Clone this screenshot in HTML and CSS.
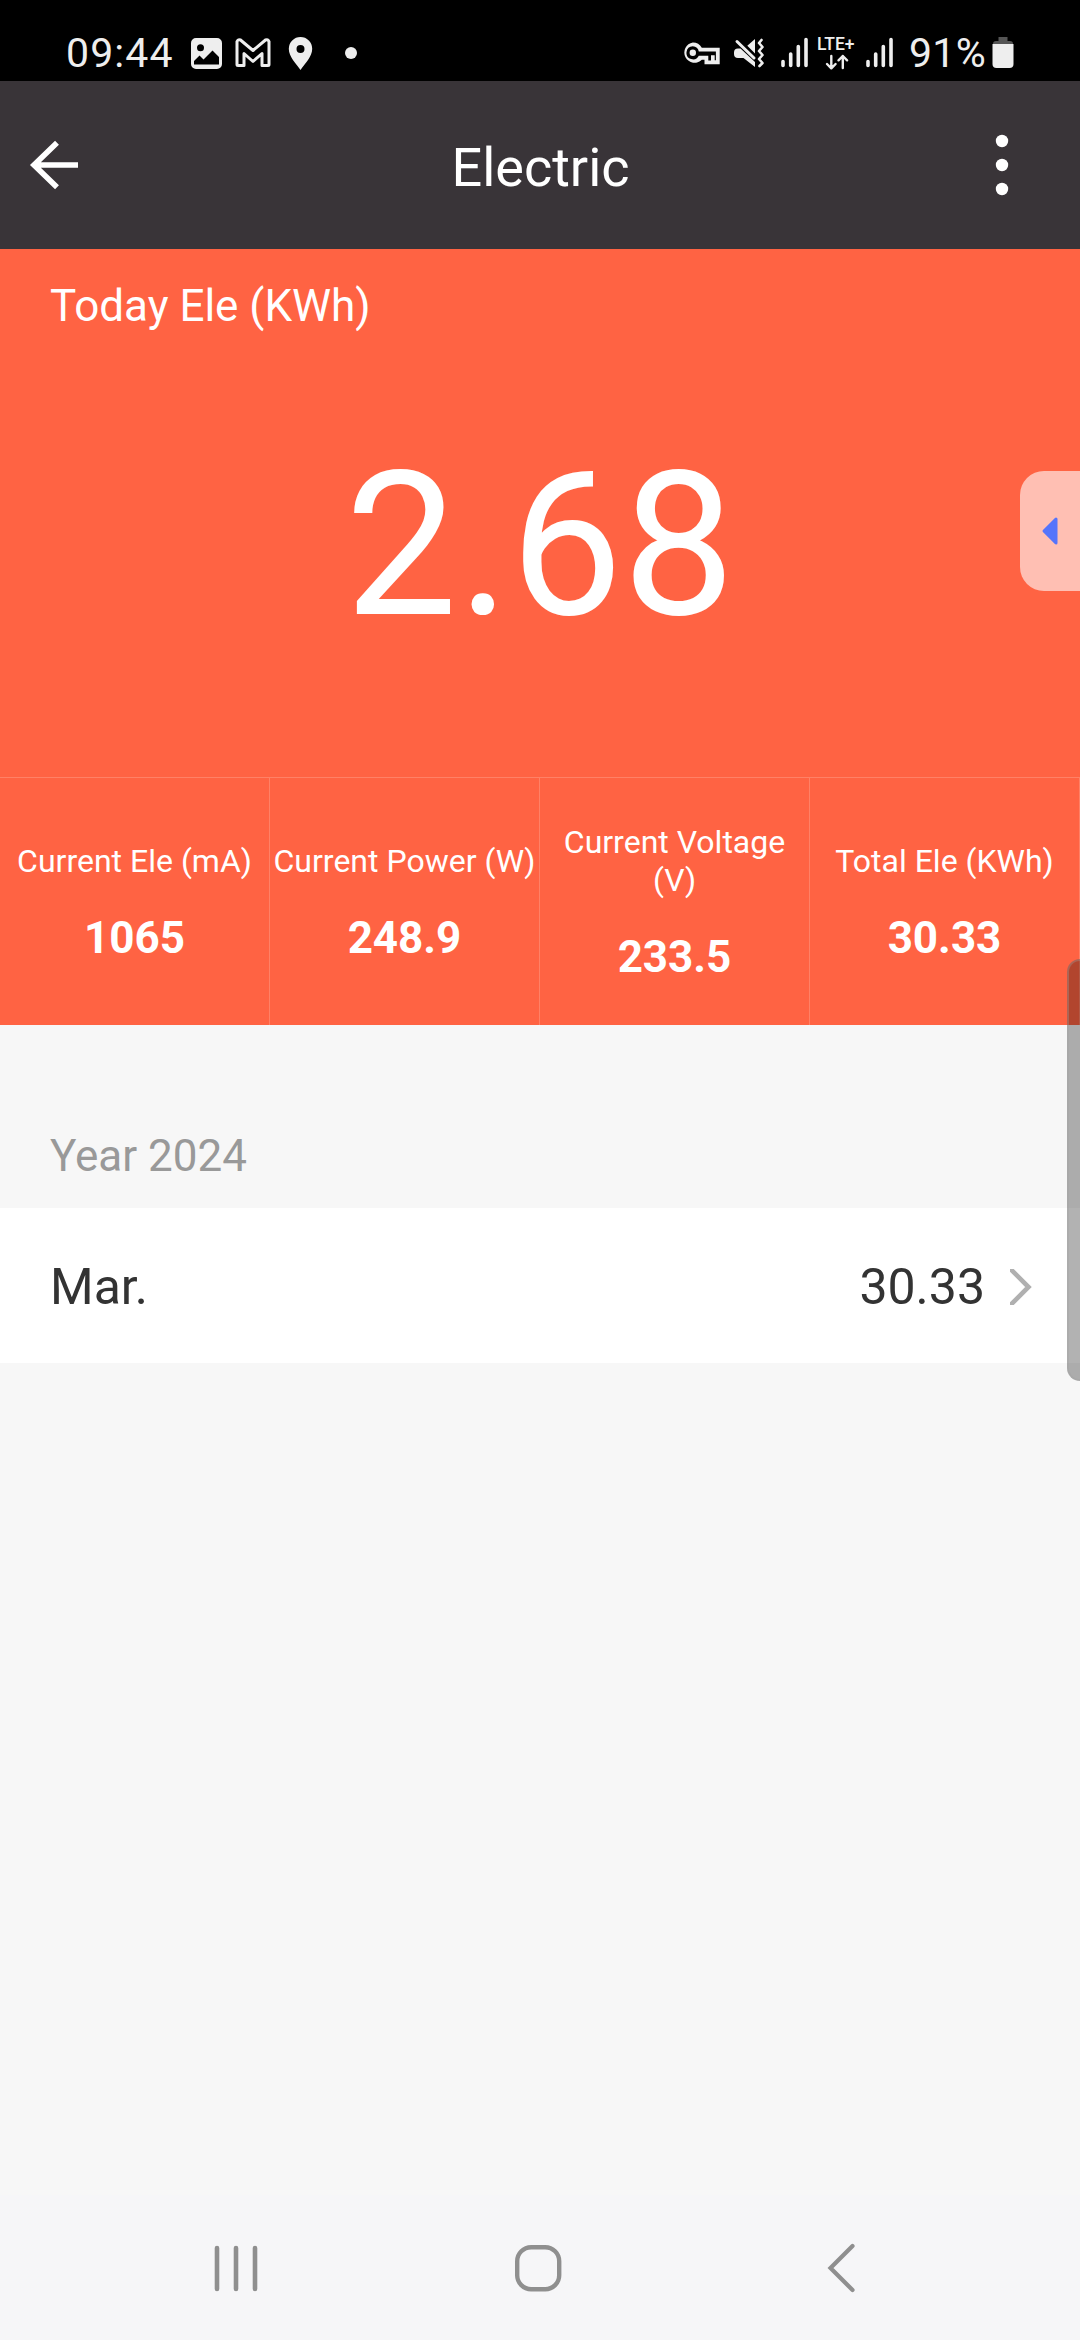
FILE: index.html
```html
<!DOCTYPE html>
<html lang="en">
<head>
<meta charset="utf-8">
<title>Electric</title>
<link rel="stylesheet" href="styles.css">
</head>
<body>
<div class="screen">
  <div class="status">
    <span class="status-text clock">09:44</span>
    <svg class="notif" width="170" height="40" viewBox="0 0 170 40">
      <path fill="#eee" fill-rule="evenodd" d="M6 4h21a5 5 0 0 1 5 5v21a5 5 0 0 1-5 5H6a5 5 0 0 1-5-5V9a5 5 0 0 1 5-5zM10.500 10.300a3.500 3.500 0 1 0 0 7 3.500 3.500 0 0 0 0-7zM4 30.500h25V23l-6.500-6.500-9 9-4-4L4 27z"/>
      <path fill="none" stroke="#eee" stroke-width="3" stroke-linejoin="round" d="M47 7.500v23q0 1 1 1h6V19.500L63 27.500l9-8V31.500h6q1 0 1-1v-23q-1-2.500-3.500-1.500L63 16.500 50.500 6Q48 5 47 7.500z"/>
      <path fill="#eee" fill-rule="evenodd" d="M110.500 3a11.700 11.700 0 0 1 11.700 11.700C122.200 23 115 29 110.500 36 106 29 98.800 23 98.800 14.700A11.700 11.700 0 0 1 110.500 3zm0 8a4 4 0 1 0 0 8 4 4 0 0 0 0-8z"/>
      <circle cx="161" cy="19" r="6" fill="#eee"/>
    </svg>
    <svg class="system" width="220" height="40" viewBox="682 34 220 40">
      <path fill="#eee" fill-rule="evenodd" d="M692.800 42.500a10.200 10.200 0 0 1 9 5.200h17.900v16.600h-15.200v-4.600h-2.700a10.200 10.200 0 1 1-9-17.200zm0 3.800a6.500 6.500 0 1 0 6 9.400h9.500v4.700h2.700v-5.100h3.700v5h1.200v-8.800h-17.100a6.500 6.500 0 0 0-6-5.200z"/>
      <circle cx="692.800" cy="52.800" r="3.200" fill="#eee"/>
      <path fill="#eee" d="M734 52.500q0-4 4-4h2.500L755 62v5L743.500 58H738q-4 0-4-4zM755 39v14.500l-7.700-7.700z"/>
      <path fill="none" stroke="#eee" stroke-width="3" stroke-linecap="round" d="M737 41.500l17 16.500"/>
      <path fill="none" stroke="#eee" stroke-width="2.600" stroke-linecap="round" stroke-linejoin="round" d="M761.500 40l-2.500 3 3.500 4-3.500 4 3.500 4-3.500 4 3.500 4-3 3"/>
      <path fill="none" stroke="#eee" stroke-width="3.600" stroke-linecap="round" d="M783 61.500v4M790.700 54v11.500M798.300 46.500v19M806 39.500v26M868 61.500v4M875.700 54v11.500M883.300 46.500v19M891 39.500v26"/>
      <text class="lte" x="817" y="50">LTE+</text>
      <path fill="none" stroke="#eee" stroke-width="2.400" stroke-linecap="round" stroke-linejoin="round" d="M831.300 56v12M827 64l4.300 4.300 4.300-4.300M842.800 68v-12M838.500 60.300l4.300-4.300 4.300 4.300"/>
    </svg>
    <span class="status-text percent">91%</span>
    <svg width="22" height="34" viewBox="0 0 22 34">
      <path fill="#555" d="M6.500 1h9v4h2.500q3 0 3 3v4H1V8q0-3 3-3h2.500z"/>
      <path fill="#eee" d="M.5 8h21v20q0 4-4 4h-13q-4 0-4-4z"/>
    </svg>
  </div>

  <header class="header">
    <svg width="50" height="50" viewBox="0 0 50 50"><path fill="none" stroke="#fff" stroke-width="5.600" d="M49 25H5M28 2.800L5 25l23 22.200"/></svg>
    <h1 class="title">Electric</h1>
    <svg width="14" height="62" viewBox="0 0 14 62" fill="#fff"><circle cx="7" cy="7" r="6.200"/><circle cx="7" cy="31" r="6.200"/><circle cx="7" cy="55" r="6.200"/></svg>
  </header>

  <section class="today">
    <div class="today-label">Today Ele (KWh)</div>
    <div class="today-value">2.68</div>
    <div class="stats">
      <div class="stat"><div class="stat-label">Current Ele (mA)</div><div class="stat-value">1065</div></div>
      <div class="stat"><div class="stat-label">Current Power (W)</div><div class="stat-value">248.9</div></div>
      <div class="stat"><div class="stat-label">Current Voltage (V)</div><div class="stat-value">233.5</div></div>
      <div class="stat"><div class="stat-label">Total Ele (KWh)</div><div class="stat-value">30.33</div></div>
    </div>
  </section>

  <main class="history">
    <h2 class="year">Year 2024</h2>
    <div class="month">
      <span>Mar.</span>
      <span class="month-value">30.33</span>
      <svg width="22" height="36" viewBox="0 0 22 36"><path fill="none" stroke="#b0b0b0" stroke-width="4.600" d="M-1-1.500L18.500 18-1 37.500"/></svg>
    </div>
  </main>

  <nav class="nav">
    <svg width="46" height="50" viewBox="0 0 46 50"><path stroke="#8f8f8f" stroke-width="4.600" stroke-linecap="round" d="M4 5v41M23 5v41M42 5v41"/></svg>
    <svg class="home" width="50" height="50" viewBox="0 0 50 50"><rect x="4.200" y="4.200" width="42" height="42" rx="14" fill="none" stroke="#8f8f8f" stroke-width="4.400"/></svg>
    <svg width="30" height="50" viewBox="0 0 30 50"><path fill="none" stroke="#8f8f8f" stroke-width="4.200" stroke-linecap="round" d="M26.500 3L4.500 25l22 22"/></svg>
  </nav>

  <div class="side-tab">
    <svg width="18" height="30" viewBox="0 0 18 30"><path fill="#5574fb" stroke="#5574fb" stroke-width="3" stroke-linejoin="round" d="M15 3v24L3 15z"/></svg>
  </div>
  <div class="edge-handle"></div>
</div>
</body>
</html>
```
FILE: styles.css
```css
* { box-sizing: border-box; }

body {
  margin: 0;
  font-family: Roboto, "Liberation Sans", sans-serif;
}

svg { display: block; flex: none; }

.screen {
  position: relative;
  display: flex;
  flex-direction: column;
  width: 1080px;
  height: 2340px;
  overflow: hidden;
  background: #f7f7f7;
}

.status {
  display: flex;
  align-items: flex-start;
  height: 81px;
  padding: 34px 27px 0 66px;
  background: #000;
}

.status-text {
  color: #eee;
  font-size: 41px;
  line-height: 38px;
  white-space: nowrap;
}

.clock { width: 124px; letter-spacing: 1.1px; }
.percent { width: 82px; margin-left: 7px; letter-spacing: 0.3px; }
.system { margin-left: 322px; }
.status svg:last-child { margin-top: 2px; margin-left: 1px; }

.lte {
  fill: #eee;
  font-size: 17.500px;
  font-weight: 500;
}

.header {
  display: flex;
  align-items: center;
  justify-content: space-between;
  height: 168px;
  padding: 0 71px 0 29px;
  background: #393438;
  color: #fff;
}

.title {
  margin: 0;
  padding: 6px 0 0 7px;
  font-size: 54px;
  font-weight: 400;
  line-height: 64px;
}

.today {
  display: flex;
  flex-direction: column;
  height: 776px;
  background: #ff6343;
  color: #fff;
}

.today-label {
  padding: 31px 50px 0;
  font-size: 44px;
  line-height: 53px;
}

.today-value {
  flex: 1;
  padding-top: 95px;
  font-size: 200px;
  line-height: 236px;
  text-align: center;
}

.stats {
  display: grid;
  grid-template-columns: repeat(4, 1fr);
  height: 248px;
  border-top: 1px solid #ff8166;
}

.stat {
  display: flex;
  flex-direction: column;
  align-items: center;
  justify-content: center;
  gap: 32px;
  padding-top: 2px;
  border-right: 1px solid #ff8166;
  text-align: center;
}

.stat-label {
  font-size: 32px;
  line-height: 38px;
}

.stat-value {
  font-size: 44px;
  font-weight: 700;
  line-height: 52px;
}

.history { flex: 1; }

.year {
  margin: 0;
  padding: 106px 50px 26px;
  color: #999;
  font-size: 44px;
  font-weight: 400;
  line-height: 51px;
}

.month {
  display: flex;
  align-items: center;
  height: 155px;
  padding: 3px 48px 0 50px;
  background: #fff;
  color: #333;
  font-size: 50px;
}

.month-value { margin: 0 25px 0 auto; }

.nav {
  display: flex;
  align-items: center;
  justify-content: space-between;
  height: 145px;
  padding: 0 224px 0 213px;
  background: #f6f6f8;
}

.home { margin-right: 9px; }

.side-tab {
  position: absolute;
  top: 471px;
  right: 0;
  display: flex;
  align-items: center;
  width: 60px;
  height: 120px;
  padding-left: 21px;
  border-radius: 24px 0 0 24px;
  background: #ffbfb3;
}

.edge-handle {
  position: absolute;
  top: 959px;
  right: 0;
  width: 13px;
  height: 422px;
  border: 2px solid rgba(160, 160, 160, 0.350);
  border-right: 0;
  border-radius: 13px 0 0 13px;
  background: rgba(0, 0, 0, 0.300);
}
```
